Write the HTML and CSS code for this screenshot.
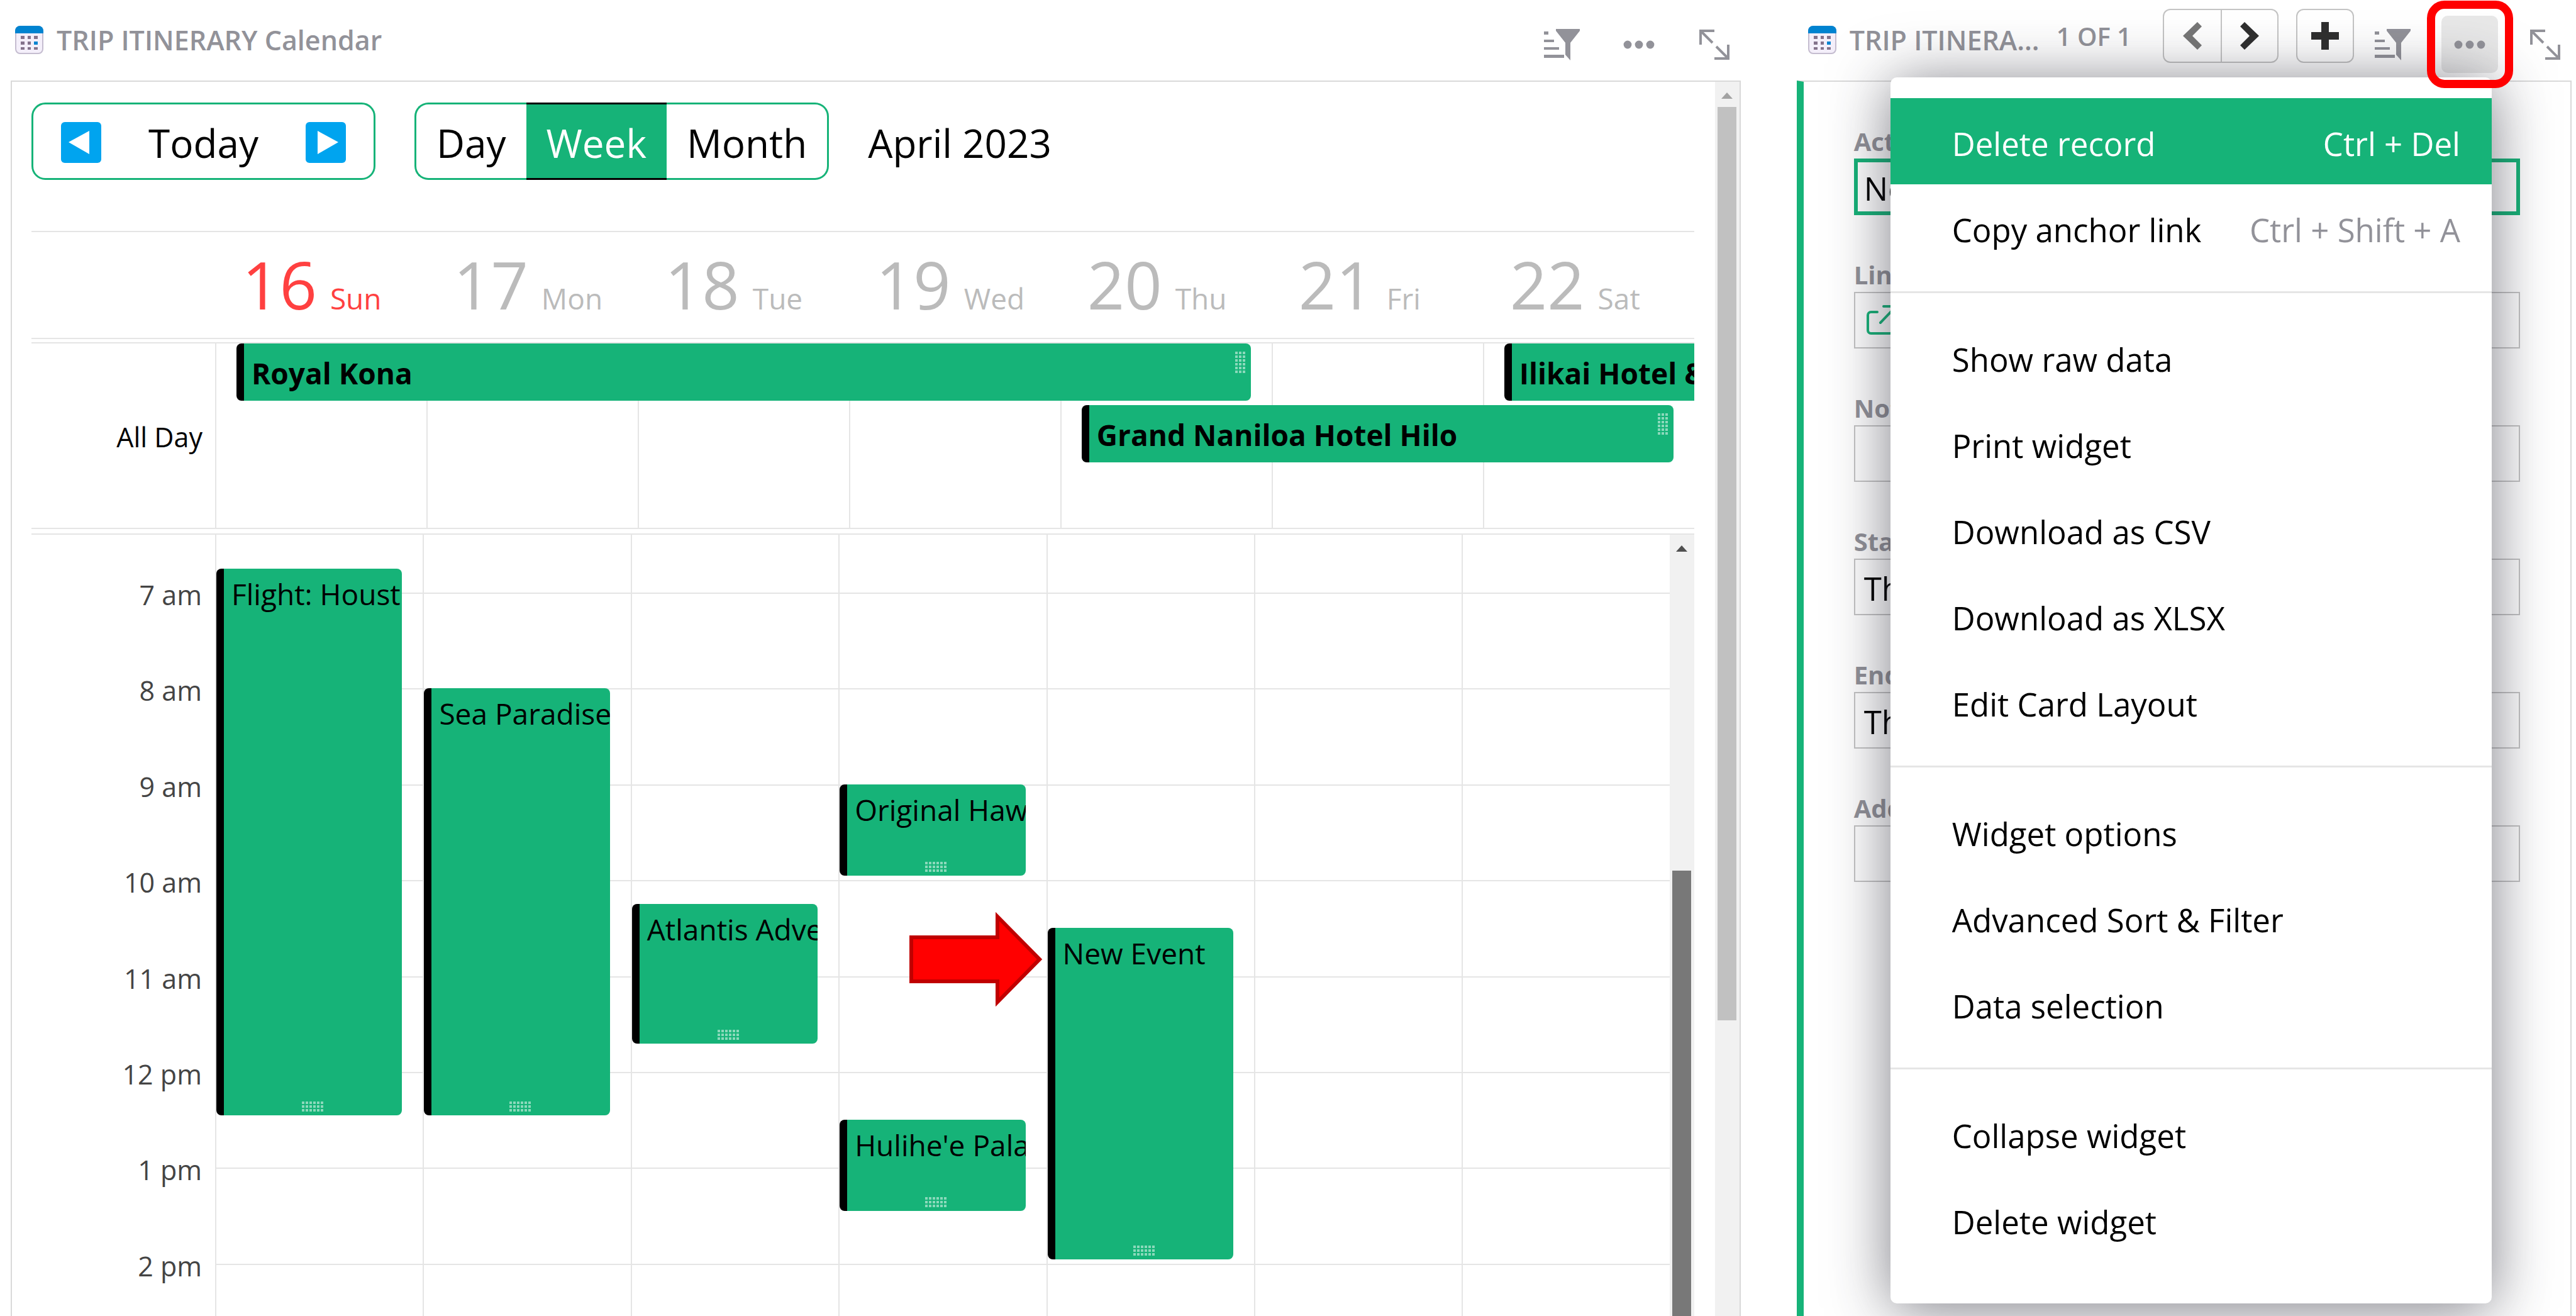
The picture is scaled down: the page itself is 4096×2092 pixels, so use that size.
FILE: index.html
```html
<!DOCTYPE html>
<html lang="en">
<head>
<meta charset="utf-8">
<title>Trip Itinerary</title>
<link rel="stylesheet" href="styles.css">
</head>
<body>
<svg class="sprite" aria-hidden="true">
  <symbol id="i-calendar" viewBox="0 0 45 45">
    <rect x="1" y="1" width="43" height="43" rx="7" fill="#f4effa" stroke="#c5bdd0" stroke-width="2"/>
    <path d="M0 12V8a8 8 0 0 1 8-8h29a8 8 0 0 1 8 8v4z" fill="#0083d0"/>
    <g fill="#84738c"><path d="M9 16h6v5H9zM20 16h5v5h-5zM30 16h6v5h-6zM9 25h6v5H9zM20 25h5v5h-5zM9 34h6v4H9zM20 34h5v4h-5zM30 34h6v4h-6z"/></g>
    <path d="M30 25h6v5h-6z" fill="#0083d0"/>
  </symbol>
  <symbol id="i-sort" viewBox="0 0 60 54">
    <path d="M2 6h7v5H2zM2 19h16v4H2zM2 31h24v4H2zM2 43h32v5H2zM21 2h38v3L44 24v28L36 43V24L21 5z" fill="#929299"/>
  </symbol>
  <symbol id="i-dots" viewBox="0 0 50 14">
    <g fill="#929299"><circle cx="7" cy="7" r="6.4"/><circle cx="25" cy="7" r="6.4"/><circle cx="43" cy="7" r="6.4"/></g>
  </symbol>
  <symbol id="i-expand" viewBox="0 0 50 50">
    <path d="M3 25V3h22M4 4l18 18M47 25v22H25M46 46L28 28" fill="none" stroke="#929299" stroke-width="4"/>
  </symbol>
  <symbol id="i-up" viewBox="0 0 18 10"><path d="M9 0l9 10H0z"/></symbol>
</svg>

<main class="page">
  <section class="widget">
    <header class="widget-head">
      <h2 class="widget-title"><svg class="title-icon"><use href="#i-calendar"/></svg>TRIP ITINERARY Calendar</h2>
      <div class="tools">
        <button class="tool tool-sort" aria-label="Sort and filter"><svg><use href="#i-sort"/></svg></button>
        <button class="tool tool-menu" aria-label="Widget menu"><svg><use href="#i-dots"/></svg></button>
        <button class="tool tool-expand" aria-label="Expand"><svg><use href="#i-expand"/></svg></button>
      </div>
    </header>
    <div class="calendar-frame">
      <div class="calendar">
        <div class="toolbar">
          <div class="today-group">
            <button class="arrow-button" aria-label="Previous"><svg viewBox="0 0 64 65"><rect width="64" height="65" rx="6" fill="#00a4ef"/><path d="M12 32L45 14v37z" fill="#fff"/></svg></button>
            <button class="today-button">Today</button>
            <button class="arrow-button" aria-label="Next"><svg viewBox="0 0 64 65"><rect width="64" height="65" rx="6" fill="#00a4ef"/><path d="M52 32L19 14v37z" fill="#fff"/></svg></button>
          </div>
          <div class="view-group">
            <button class="view-button">Day</button>
            <button class="view-button view-active">Week</button>
            <button class="view-button">Month</button>
          </div>
          <span class="period">April 2023</span>
        </div>

        <div class="week-head">
          <div class="day-name day-sunday"><b>16</b> Sun</div>
          <div class="day-name"><b>17</b> Mon</div>
          <div class="day-name"><b>18</b> Tue</div>
          <div class="day-name"><b>19</b> Wed</div>
          <div class="day-name"><b>20</b> Thu</div>
          <div class="day-name"><b>21</b> Fri</div>
          <div class="day-name"><b>22</b> Sat</div>
        </div>

        <div class="allday">
          <div class="allday-label">All Day</div>
          <div class="day-line" style="--day:1"></div>
          <div class="day-line" style="--day:2"></div>
          <div class="day-line" style="--day:3"></div>
          <div class="day-line" style="--day:4"></div>
          <div class="day-line" style="--day:5"></div>
          <div class="day-line" style="--day:6"></div>
          <div class="day-line" style="--day:7"></div>
          <div class="banner" style="--day:1;--days:5;--row:1">Royal Kona<i class="grip-side"></i></div>
          <div class="banner banner-open" style="--day:7;--days:1;--row:1">Ilikai Hotel &amp; Suites</div>
          <div class="banner" style="--day:5;--days:3;--row:2">Grand Naniloa Hotel Hilo<i class="grip-side"></i></div>
        </div>

        <div class="schedule">
          <div class="time-grid">
            <div class="day-line" style="--day:1"></div>
            <div class="day-line" style="--day:2"></div>
            <div class="day-line" style="--day:3"></div>
            <div class="day-line" style="--day:4"></div>
            <div class="day-line" style="--day:5"></div>
            <div class="day-line" style="--day:6"></div>
            <div class="day-line" style="--day:7"></div>
            <div class="hour" style="--slot:3">7 am</div><div class="hour-line" style="--slot:3"></div>
            <div class="hour" style="--slot:7">8 am</div><div class="hour-line" style="--slot:7"></div>
            <div class="hour" style="--slot:11">9 am</div><div class="hour-line" style="--slot:11"></div>
            <div class="hour" style="--slot:15">10 am</div><div class="hour-line" style="--slot:15"></div>
            <div class="hour" style="--slot:19">11 am</div><div class="hour-line" style="--slot:19"></div>
            <div class="hour" style="--slot:23">12 pm</div><div class="hour-line" style="--slot:23"></div>
            <div class="hour" style="--slot:27">1 pm</div><div class="hour-line" style="--slot:27"></div>
            <div class="hour" style="--slot:31">2 pm</div><div class="hour-line" style="--slot:31"></div>
            <div class="event" style="--day:1;--slot:2;--len:23">Flight: Houston<i class="grip"></i></div>
            <div class="event" style="--day:2;--slot:7;--len:18">Sea Paradise<i class="grip"></i></div>
            <div class="event" style="--day:3;--slot:16;--len:6">Atlantis Adventures<i class="grip"></i></div>
            <div class="event" style="--day:4;--slot:11;--len:4">Original Hawaiian<i class="grip"></i></div>
            <div class="event" style="--day:4;--slot:25;--len:4">Hulihe'e Palace<i class="grip"></i></div>
            <div class="event" style="--day:5;--slot:17;--len:14">New Event<i class="grip"></i></div>
          </div>
          <div class="scroll scroll-inner"><svg class="scroll-up"><use href="#i-up"/></svg><div class="scroll-thumb"></div></div>
          <svg class="pointer" viewBox="0 0 212 152"><path d="M3 41H140V8L207 76L140 144V111H3z" fill="#f00" stroke="#c00000" stroke-width="6"/></svg>
        </div>
      </div>
      <div class="scroll scroll-outer"><svg class="scroll-up"><use href="#i-up"/></svg><div class="scroll-thumb"></div></div>
    </div>
  </section>

  <section class="widget widget-card">
    <header class="widget-head">
      <h2 class="widget-title"><svg class="title-icon"><use href="#i-calendar"/></svg>TRIP ITINERA...</h2>
      <div class="record-nav">
        <span class="record-count">1 OF 1</span>
        <div class="nav-pair">
          <button class="nav-button" aria-label="Previous record"><svg viewBox="0 0 32 46"><path d="M24 1l7 7-15 15 15 15-7 7L1 23z" fill="#777"/></svg></button>
          <button class="nav-button" aria-label="Next record"><svg viewBox="0 0 32 46"><path d="M8 1L1 8l15 15L1 38l7 7 23-22z" fill="#2f2f2f"/></svg></button>
        </div>
        <button class="nav-button" aria-label="Add record"><svg class="nav-plus" viewBox="0 0 46 46"><path d="M17 1h12v16h16v12H29v16H17V29H1V17h16z" fill="#2f2f2f"/></svg></button>
      </div>
      <div class="tools">
        <button class="tool tool-sort" aria-label="Sort and filter"><svg><use href="#i-sort"/></svg></button>
        <button class="tool tool-menu tool-open" aria-label="Widget menu"><svg><use href="#i-dots"/></svg></button>
        <button class="tool tool-expand" aria-label="Expand"><svg><use href="#i-expand"/></svg></button>
      </div>
    </header>
    <form class="card">
      <div class="field"><label for="f1">Activity</label><input class="field-active" id="f1" value="New Event"></div>
      <div class="field"><label for="f2">Link</label>
        <div class="link-box">
          <svg viewBox="0 0 50 50"><path d="M17 12H7a5 5 0 0 0-5 5v24a5 5 0 0 0 5 5h30a5 5 0 0 0 5-5V31M22 29L46 4M27 3h20v20" fill="none" stroke="#16b378" stroke-width="4" stroke-linecap="round"/></svg>
          <input id="f2">
        </div>
      </div>
      <div class="field"><label for="f3">Notes</label><input id="f3"></div>
      <div class="field"><label for="f4">Start</label><input id="f4" value="Thu"></div>
      <div class="field"><label for="f5">End</label><input id="f5" value="Thu"></div>
      <div class="field"><label for="f6">Address</label><input id="f6"></div>
    </form>

    <menu class="menu">
      <li><button class="menu-item menu-selected">Delete record<kbd>Ctrl + Del</kbd></button></li>
      <li><button class="menu-item">Copy anchor link<kbd>Ctrl + Shift + A</kbd></button></li>
      <li class="menu-rule"></li>
      <li><button class="menu-item">Show raw data</button></li>
      <li><button class="menu-item">Print widget</button></li>
      <li><button class="menu-item">Download as CSV</button></li>
      <li><button class="menu-item">Download as XLSX</button></li>
      <li><button class="menu-item">Edit Card Layout</button></li>
      <li class="menu-rule"></li>
      <li><button class="menu-item">Widget options</button></li>
      <li><button class="menu-item">Advanced Sort &amp; Filter</button></li>
      <li><button class="menu-item">Data selection</button></li>
      <li class="menu-rule"></li>
      <li><button class="menu-item">Collapse widget</button></li>
      <li><button class="menu-item">Delete widget</button></li>
    </menu>
    <div class="highlight"></div>
  </section>
</main>
</body>
</html>
```
FILE: styles.css
```css
* { box-sizing: border-box; }

:root {
  --green: #16b378;
  --gray: #929299;
  --line: #e5e5e5;
  --frame: #d9d9d9;
}

body {
  margin: 0;
  background: #fff;
  color: #000;
  font-family: "Open Sans", "Noto Sans", sans-serif;
}

button, input {
  margin: 0;
  padding: 0;
  border: 0;
  background: none;
  color: inherit;
  font: inherit;
}

svg { display: block; }
.sprite { position: absolute; width: 0; height: 0; }

.page {
  display: grid;
  grid-template-columns: 2750fr 1232fr;
  gap: 89px;
  height: 100vh;
  padding: 0 7px 0 17px;
  overflow: hidden;
}

/* widget header */
.widget {
  display: flex;
  flex-direction: column;
  min-width: 0;
  height: 100vh;
}
.widget-card { position: relative; }

.widget-head {
  display: flex;
  align-items: flex-start;
  flex: none;
  height: 128px;
  padding: 0 17px 0 7px;
}
.widget-card .widget-head { padding-left: 18px; }

.widget-title {
  display: flex;
  align-items: center;
  gap: 21px;
  flex: 1;
  height: 45px;
  margin: 41px 0 0;
  color: var(--gray);
  font-size: 43px;
  font-weight: 600;
  line-height: 45px;
  white-space: nowrap;
}
.title-icon { width: 45px; height: 45px; flex: none; }

.tools { display: flex; align-items: center; margin-top: 25px; }
.tool { display: grid; place-items: center; height: 91px; border-radius: 10px; }
.tool-sort { width: 60px; }
.tool-sort svg { width: 60px; height: 54px; }
.tool-menu { width: 90px; margin: 0 50px 0 48px; }
.tool-menu svg { width: 50px; height: 14px; }
.tool-open { background: #e8e8e8; }
.tool-expand, .tool-expand svg { width: 50px; }
.tool-expand svg { height: 50px; }

.record-nav { display: flex; align-items: center; margin: 14px 31px 0 0; }
.record-count {
  margin-right: 50px;
  color: var(--gray);
  font-size: 40px;
  font-weight: 600;
  line-height: 85px;
  white-space: nowrap;
}
.nav-pair { display: flex; margin-right: 28px; }
.nav-button {
  display: grid;
  place-items: center;
  width: 92px;
  height: 86px;
  border: 2px solid #c4c4c4;
  border-radius: 12px;
}
.nav-button svg { width: 32px; height: 46px; }
.nav-button .nav-plus { width: 46px; }
.nav-pair .nav-button:first-child { border-radius: 12px 0 0 12px; border-right: 0; }
.nav-pair .nav-button:last-child { border-radius: 0 12px 12px 0; }

/* calendar */
.calendar-frame {
  display: flex;
  flex: 1;
  min-height: 0;
  border: 2px solid var(--frame);
  border-bottom: 0;
}
.calendar {
  display: flex;
  flex-direction: column;
  flex: 1;
  min-width: 0;
  padding: 33px 33px 0 31px;
}

.toolbar {
  display: flex;
  align-items: center;
  gap: 62px;
  height: 123px;
  margin-bottom: 81px;
  flex: none;
  font-size: 62px;
}
.today-group {
  display: flex;
  align-items: center;
  justify-content: space-between;
  width: 547px;
  height: 123px;
  padding: 4px 44px 0;
  border: 3px solid var(--green);
  border-radius: 22px;
}
.arrow-button { width: 64px; height: 65px; }
.view-group { display: flex; height: 123px; }
.view-button {
  padding: 4px 32px 0;
  border: 3px solid var(--green);
  border-width: 3px 0;
}
.view-button:first-child { border-left-width: 3px; border-radius: 22px 0 0 22px; }
.view-button:last-child { border-right-width: 3px; border-radius: 0 22px 22px 0; }
.view-active { border-color: #000; background: var(--green); color: #fff; }
.period { padding-top: 4px; }

.week-head {
  display: grid;
  grid-template-columns: repeat(7, 1fr);
  flex: none;
  height: 172px;
  padding-left: 292px;
  border-top: 2px solid var(--line);
  border-bottom: 2px solid var(--line);
}
.day-name {
  padding-left: 43px;
  color: #bbb;
  font-size: 46px;
  line-height: 165px;
  white-space: nowrap;
}
.day-name b { margin-right: 9px; font-size: 104px; font-weight: 400; }
.day-sunday { color: #ff4040; }

.allday {
  display: grid;
  grid-template-columns: 292px repeat(7, 1fr);
  grid-template-rows: 91px 91px 1fr;
  row-gap: 7px;
  flex: none;
  height: 297px;
  margin-top: 5px;
  border-top: 2px solid var(--line);
  border-bottom: 2px solid var(--line);
}
.allday-label {
  grid-column: 1;
  grid-row: 1 / -1;
  place-self: center end;
  padding: 4px 20px 0 0;
  font-size: 43px;
}
.day-line {
  grid-column: calc(var(--day) + 1);
  grid-row: 1 / -1;
  border-left: 2px solid var(--line);
}
.banner {
  display: flex;
  justify-content: space-between;
  grid-column: calc(var(--day) + 1) / span var(--days);
  grid-row: var(--row);
  margin: 0 33px 0 34px;
  padding: 0 9px 0 12px;
  border-left: 12px solid #000;
  border-radius: 8px;
  background: var(--green);
  font-size: 46px;
  font-weight: 700;
  line-height: 94px;
  white-space: nowrap;
  overflow: hidden;
}
.banner-open { margin-right: 0; border-radius: 8px 0 0 8px; }

.grip, .grip-side {
  background:
    repeating-linear-gradient(90deg, transparent 0 4px, var(--green) 4px 6px),
    repeating-linear-gradient(#8bd9bb 0 4px, var(--green) 4px 6px);
}
.grip-side { width: 16px; height: 34px; margin-top: 13px; }

.schedule {
  position: relative;
  display: flex;
  flex: 1;
  min-height: 0;
  margin-top: 7px;
  border-top: 2px solid var(--line);
  overflow: hidden;
}
/* first row is the sliver above 6:45, then one row per quarter hour */
.time-grid {
  display: grid;
  grid-template-columns: 292px repeat(7, 1fr);
  grid-template-rows: 54px repeat(33, 1fr);
  flex: 1;
  height: 1311px;
}
.hour {
  grid-column: 1;
  grid-row: var(--slot) / span 4;
  justify-self: end;
  height: 56px;
  margin-top: -24px;
  padding-right: 21px;
  color: #444;
  font-size: 43px;
  line-height: 56px;
}
.hour-line {
  grid-column: 2 / -1;
  grid-row: var(--slot) / span 4;
  border-top: 2px solid var(--line);
}
.event {
  display: flex;
  flex-direction: column;
  justify-content: space-between;
  grid-column: calc(var(--day) + 1);
  grid-row: var(--slot) / span var(--len);
  min-width: 0;
  margin: 0 33px 7px 2px;
  padding: 8px 0 6px 12px;
  border-left: 12px solid #000;
  border-radius: 8px;
  background: var(--green);
  font-size: 46px;
  line-height: 64px;
  white-space: nowrap;
  overflow: hidden;
}
.grip { width: 34px; height: 16px; margin-left: 112px; }

.pointer {
  position: absolute;
  left: calc(292px + (100% - 331px) / 7 * 4 - 218px);
  top: 599px;
  width: 212px;
  height: 152px;
}

/* scrollbars */
.scroll {
  display: flex;
  flex-direction: column;
  align-items: center;
  flex: none;
  width: 39px;
  background: #f1f1f1;
}
.scroll-up { width: 18px; height: 10px; margin-top: 17px; }
.scroll-thumb { width: 30px; }
.scroll-inner .scroll-up { fill: #505050; }
.scroll-inner .scroll-thumb { flex: 1; margin-top: 507px; background: #787878; }
.scroll-outer .scroll-up { fill: #a3a3a3; }
.scroll-outer .scroll-thumb { height: 74%; margin-top: 13px; background: #c1c1c1; }

/* record card */
.card {
  flex: 1;
  min-height: 0;
  padding: 65px 80px 0;
  border: 2px solid var(--frame);
  border-left: 11px solid var(--green);
  border-bottom: 0;
}
.field { display: flex; flex-direction: column; height: 212px; }
.field label {
  height: 57px;
  color: var(--gray);
  font-size: 40px;
  font-weight: 700;
  line-height: 60px;
}
.field input {
  width: 100%;
  height: 90px;
  padding: 3px 14px 0;
  border: 2px solid #c4c4c4;
  font-size: 51px;
}
.field .field-active { padding: 3px 10px 0; border: 6px solid var(--green); }
.link-box {
  display: flex;
  align-items: center;
  height: 90px;
  padding-left: 18px;
  border: 2px solid #c4c4c4;
}
.link-box svg { width: 50px; height: 50px; flex: none; }
.link-box input { border: 0; height: 86px; }

/* drop-down menu */
.menu {
  position: absolute;
  top: 123px;
  right: 127px;
  left: 149px;
  margin: 0;
  padding: 33px 0 65px;
  border-radius: 10px;
  background: #fff;
  box-shadow: 0 8px 96px rgba(38, 38, 51, 0.6);
  list-style: none;
}
.menu-item {
  display: flex;
  align-items: center;
  justify-content: space-between;
  width: 100%;
  height: 137px;
  padding: 7px 50px 0 98px;
  font-size: 51px;
  line-height: 64px;
  white-space: nowrap;
}
.menu-item kbd { color: var(--gray); font: inherit; }
.menu-selected { background: var(--green); }
.menu-selected, .menu-selected kbd { color: #fff; }
.menu-rule { height: 3px; margin: 33px 0; background: var(--line); }

.highlight {
  position: absolute;
  top: 1px;
  right: 93px;
  width: 137px;
  height: 139px;
  border: 13px solid #f00;
  border-radius: 28px;
}
```
